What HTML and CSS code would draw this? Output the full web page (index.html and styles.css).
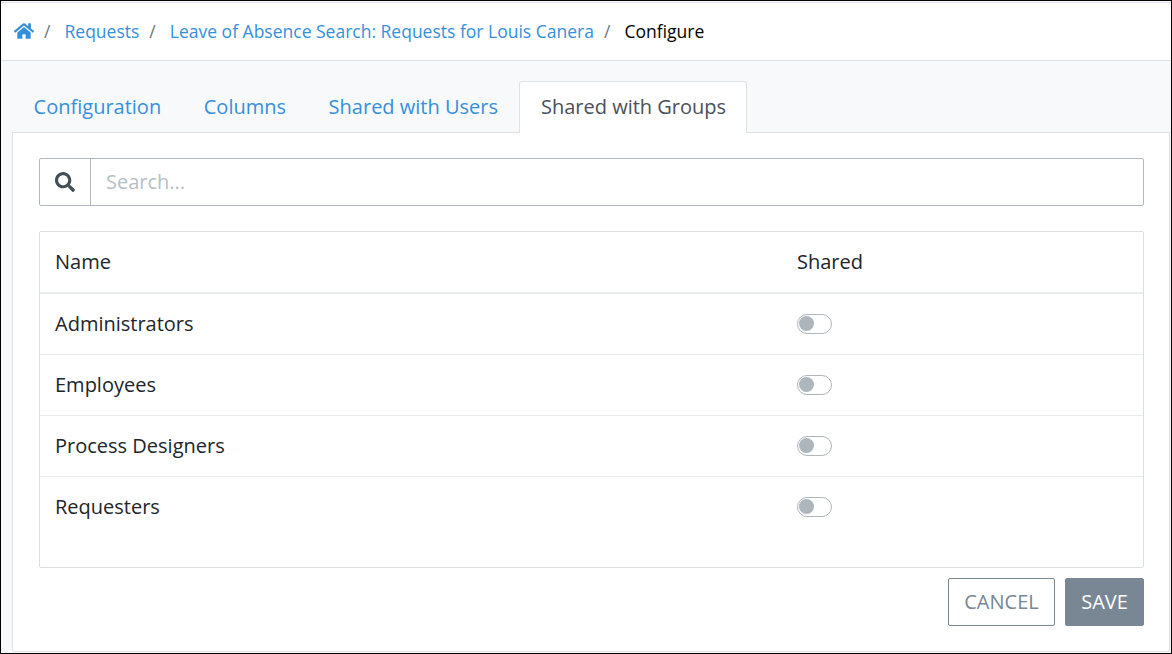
FILE: index.html
```html
<!DOCTYPE html>
<html lang="en">
<head>
<meta charset="utf-8">
<title>Configure</title>
<link rel="stylesheet" href="styles.css">
</head>
<body>
<div class="frame">
  <nav class="breadcrumb">
    <a class="home" aria-label="Home"><svg viewBox="0 0 576 512" width="20" height="18"><path fill="currentColor" d="M280.400 148.300L96 300.100V464a16 16 0 0 0 16 16l112.100-.3a16 16 0 0 0 15.900-16V368a16 16 0 0 1 16-16h64a16 16 0 0 1 16 16v95.600a16 16 0 0 0 16 16.100L464 480a16 16 0 0 0 16-16V300L295.700 148.300a12.200 12.200 0 0 0-15.300 0zM571.600 251.500L488 182.600V44a12 12 0 0 0-12-12h-56a12 12 0 0 0-12 12v72.600L318.500 43a48 48 0 0 0-61 0L4.300 251.500a12 12 0 0 0-1.600 16.900l25.500 31a12 12 0 0 0 16.900 1.600L280.400 107.200a12.200 12.200 0 0 1 15.300 0L530.900 301a12 12 0 0 0 16.900-1.600l25.500-31a12 12 0 0 0-1.700-16.900z"/></svg></a>
    <span class="sep">/</span>
    <a>Requests</a>
    <span class="sep">/</span>
    <a>Leave of Absence Search: Requests for Louis Canera</a>
    <span class="sep">/</span>
    <span class="current">Configure</span>
  </nav>
  <main class="content">
    <div class="tabs">
      <a class="tab">Configuration</a>
      <a class="tab">Columns</a>
      <a class="tab">Shared with Users</a>
      <a class="tab active">Shared with Groups</a>
    </div>
    <section class="panel">
      <div class="search">
        <span class="search-icon"><svg viewBox="0 0 512 512" width="20" height="20"><path fill="currentColor" d="M505 442.700L405.300 343c-4.500-4.500-10.600-7-17-7H372c27.600-35.300 44-79.700 44-128C416 93.100 322.900 0 208 0S0 93.100 0 208s93.100 208 208 208c48.300 0 92.700-16.400 128-44v16.300c0 6.400 2.500 12.500 7 17l99.700 99.700c9.400 9.400 24.600 9.400 33.900 0l28.300-28.300c9.400-9.400 9.400-24.600.1-34zM208 336c-70.700 0-128-57.200-128-128 0-70.700 57.200-128 128-128 70.700 0 128 57.200 128 128 0 70.700-57.200 128-128 128z"/></svg></span>
        <span class="placeholder">Search...</span>
      </div>
      <div class="table">
        <div class="row head"><span class="cell">Name</span><span class="cell">Shared</span></div>
        <div class="row"><span class="cell">Administrators</span><span class="switch"></span></div>
        <div class="row"><span class="cell">Employees</span><span class="switch"></span></div>
        <div class="row"><span class="cell">Process Designers</span><span class="switch"></span></div>
        <div class="row"><span class="cell">Requesters</span><span class="switch"></span></div>
      </div>
      <div class="actions">
        <button class="btn cancel">CANCEL</button>
        <button class="btn save">SAVE</button>
      </div>
    </section>
  </main>
</div>
</body>
</html>
```
FILE: styles.css
```css
* { box-sizing: border-box; }
body { margin: 0; font-family: "Open Sans", sans-serif; font-size: 20px; color: #212529; }
.frame { width: 1172px; height: 654px; border: 1px solid #000; display: flex; flex-direction: column; overflow: hidden; background: #fff; }
.breadcrumb { flex: none; margin-top: 1px; height: 59px; border-top: 1px solid #e6dcec; border-bottom: 1px solid #dee2e6; padding: 0 0 2px 13px; display: flex; align-items: center; font-size: 17.5px; color: #3490dc; white-space: nowrap; }
.home { display: flex; width: 20px; padding-top: 1px; }
.sep { width: 30.500px; padding-left: 10px; color: #6c757d; flex: none; }
.current { color: #000; }
.content { flex: 1; background: #f7f9fb; padding: 20px 1px 1px 11px; display: flex; flex-direction: column; }
.tabs { display: flex; height: 52px; flex: none; border-bottom: 1px solid #dee2e6; }
.tab { height: 51px; padding: 0 21px 0 21.600px; line-height: 51px; color: #3490dc; white-space: nowrap; }
.tab.active { height: 52px; background: #fff; border: 1px solid #dee2e6; border-bottom: 0; border-radius: 3px 3px 0 0; color: #495057; padding: 0 20px 0 21px; line-height: 50px; }
.panel { flex: 1; background: #fff; border: 1px solid #dfe1e3; border-top: 0; border-radius: 0 0 3px 3px; padding: 25px 25px 0 26px; display: flex; flex-direction: column; }
.search { height: 48px; flex: none; border: 1px solid #b0b9c1; border-radius: 2px; display: flex; align-items: center; }
.search-icon { width: 51px; height: 46px; border-right: 1px solid #b0b9c1; display: flex; align-items: center; justify-content: center; color: #454d55; }
.placeholder { padding: 0 0 2px 15px; color: #b6bfc6; }
.table { margin-top: 25px; height: 337px; flex: none; border: 1px solid #dcdfe1; border-radius: 2px; }
.row { height: 61px; display: grid; grid-template-columns: 742px 1fr; align-items: center; padding-left: 15px; border-bottom: 1px solid #e9ecef; }
.row.head { height: 62px; border-bottom-width: 2px; }
.row:last-child { border-bottom-color: transparent; }
.cell { padding-bottom: 2px; }
.switch { width: 35px; height: 20px; border: 1px solid #adb5bd; border-radius: 10px; padding: 1px; }
.switch::before { content: ""; display: block; width: 15px; height: 15px; border-radius: 50%; background: #adb5bd; }
.actions { margin-top: 10px; display: flex; justify-content: flex-end; gap: 10px; }
.btn { height: 48px; border: 1px solid #788793; border-radius: 2px; font: 20px "Open Sans", sans-serif; padding: 0 0 2px; }
.cancel { width: 107px; background: #fff; color: #788793; }
.save { width: 79px; background: #788793; color: #fff; }
```
